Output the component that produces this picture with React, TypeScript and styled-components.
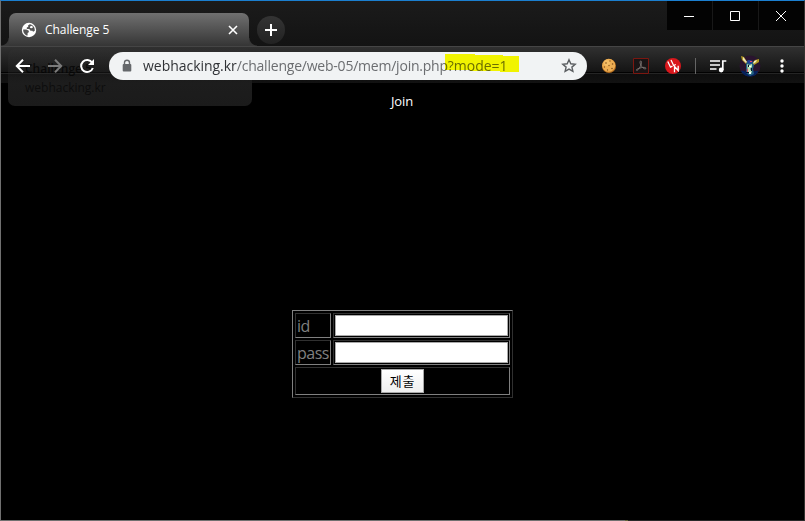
import React from "react";
import styled, { createGlobalStyle } from "styled-components";

const GlobalStyle = createGlobalStyle`
  * { box-sizing: border-box; }
  body { margin: 0; background: #000; overflow: hidden; }
  button, input { font: inherit; margin: 0; padding: 0; }
`;

const BrowserWindow = styled.div`
  position: relative;
  display: flex;
  flex-direction: column;
  width: 805px;
  height: 521px;
  background: #000;
  border: 1px solid #707070;
  border-top-color: #1b7fd0;
  border-right-color: #34322f;
  border-bottom: 0;
  font-family: "Open Sans", "Noto Sans", "Noto Sans CJK KR", sans-serif;
`;

const TabStrip = styled.header`
  display: flex;
  height: 45px;
  padding-left: 8px;
  background: linear-gradient(#1b1b1b, #131313);
`;

const Tab = styled.div`
  position: relative;
  display: flex;
  align-items: center;
  width: 240px;
  height: 33px;
  margin-top: 12px;
  padding: 0 11px 0 12px;
  border-radius: 7px 7px 0 0;
  background: linear-gradient(#707070, #353535);
  color: #fff;
  &::before, &::after {
    content: "";
    position: absolute;
    bottom: 0;
    width: 8px;
    height: 8px;
  }
  &::before {
    left: -8px;
    background: radial-gradient(circle at 0 0, transparent 7px, #383838 8px);
  }
  &::after {
    right: -8px;
    background: radial-gradient(circle at 100% 0, transparent 7px, #383838 8px);
  }
`;

const TabTitle = styled.span`
  flex: 1;
  margin-left: 8px;
  font-size: 12px;
  line-height: 16px;
  letter-spacing: -0.06px;
`;

const NewTab = styled.button`
  display: grid;
  place-items: center;
  width: 28px;
  height: 28px;
  margin: 15px 0 0 8px;
  border: 0;
  border-radius: 50%;
  background: linear-gradient(#343434, #222);
`;

const WindowControls = styled.div`
  display: flex;
  gap: 1px;
  height: 29px;
  margin-left: auto;
  background: #181818;
`;

const ControlButton = styled.button`
  display: grid;
  place-items: center;
  width: 45px;
  padding-right: 1px;
  border: 0;
  background: #030303;
`;

const Toolbar = styled.nav`
  display: flex;
  align-items: flex-start;
  height: 37px;
  padding: 5px 0 0 14px;
  border-top: 1px solid #454545;
  background: linear-gradient(#303030 0, #141414 25px, #020202 25px, #020202 26px, #252525 26px, #252525 27px, #0e0e0e 27px, #121212 100%);
`;

const IconSlot = styled.span<{ $width: number; $gap?: number }>`
  display: grid;
  place-items: center;
  flex: none;
  width: ${(p) => p.$width}px;
  height: 28px;
  margin-left: ${(p) => p.$gap ?? 0}px;
`;

const AddressBar = styled.div`
  display: flex;
  align-items: center;
  width: 478px;
  height: 28px;
  margin-left: 14px;
  padding: 0 10px 0 12px;
  border-radius: 14px;
  background: #f1f3f4;
`;

const Url = styled.div`
  position: relative;
  flex: 1;
  height: 28px;
  margin-left: 10px;
  color: #6b6d70;
  font-size: 14px;
  line-height: 28px;
  white-space: nowrap;
  letter-spacing: -0.22px;
`;

const Host = styled.span`
  color: #303236;
  letter-spacing: -0.03px;
`;

const Query = styled.span`
  letter-spacing: -0.02px;
`;

const Marker = styled.svg`
  position: absolute;
  left: 302px;
  top: 1px;
  mix-blend-mode: multiply;
`;

const Divider = styled.span`
  width: 1px;
  height: 16px;
  margin: 6px 0 0 14px;
  background: #656565;
`;

const TabHover = styled.aside`
  position: absolute;
  left: 7px;
  top: 48px;
  width: 244px;
  height: 57px;
  padding: 10px 17px;
  border-radius: 7px;
  background: linear-gradient(rgba(54, 54, 54, 0.18) 0, rgba(46, 46, 46, 0.3) 25px, #1d1d1d 34px, #1b1b1b 100%);
  color: #0d0d0d;
  font-size: 12px;
  line-height: 19px;
  z-index: 1;
  pointer-events: none;
`;

const HoverTitle = styled.div`
  color: rgba(0, 0, 0, 0.68);
  font-weight: 600;
`;

const OverlayBar = styled.div`
  position: relative;
  z-index: 2;
  display: flex;
`;

const Page = styled.main`
  flex: 1;
  display: flex;
  flex-direction: column;
  align-items: center;
`;

const Heading = styled.div`
  margin-top: 9px;
  padding-right: 1px;
  color: #fff;
  font-size: 13px;
  line-height: 18px;
  letter-spacing: -0.1px;
`;

const JoinForm = styled.form`
  display: grid;
  grid-template-columns: 36px 177px;
  grid-template-rows: 25px 25px 28px;
  gap: 2px;
  width: 221px;
  height: 88px;
  margin-top: 200px;
  padding: 2px;
  border: 1px solid;
  border-color: #808080 #303030 #303030 #808080;
`;

const Cell = styled.div<{ $wide?: boolean }>`
  display: flex;
  align-items: center;
  justify-content: ${(p) => (p.$wide ? "center" : "flex-start")};
  grid-column: ${(p) => (p.$wide ? "1 / -1" : "auto")};
  padding: 1px;
  border: 1px solid;
  border-color: #303030 #808080 #808080 #303030;
  color: #808080;
  font-size: 16px;
  line-height: 23px;
  letter-spacing: -0.5px;
`;

const Label = styled.label`
  padding-top: 1px;
`;

const Field = styled.input`
  width: 173px;
  height: 21px;
  border: 1px solid #a9a9a9;
  background: #fff;
  outline: 0;
`;

const Submit = styled.button`
  width: 43px;
  height: 24px;
  border: 1px solid #a9a9a9;
  background: linear-gradient(#fff, #efefef);
  color: #000;
  font: 13px/20px "Noto Sans CJK KR", sans-serif;
  letter-spacing: 0.7px;
`;

const Footer = styled.div`
  height: 1px;
  background: linear-gradient(90deg, #707070 624px, #66663c 624px, #66663c 627px, #292929 627px);
`;

const Globe = () => (
  <svg width="16" height="16" viewBox="0 0 16 16">
    <circle cx="8" cy="8" r="7.2" fill="#fff" />
    <path d="M8.8 2.3 7 3.6l.3 1.2-1.5.7v1.4h2.5l1.2 1.9h1.8l.9 1 1.6-1.1C14 5.4 12 2.8 8.8 2.3Z" fill="#555" />
    <path d="M2.2 7.4h3.2l2.4 1.3v1.6l-1.2.8v2.5C4 13 2 10.600 2.200 7.400Z" fill="#555" />
    <path d="m9.300 4.200 1.600-.5 1.200 1.600-1.500 1-1.700-.6Z" fill="#fff" />
  </svg>
);

const Cookie = () => (
  <svg width="16" height="16" viewBox="0 0 16 16">
    <circle cx="8" cy="8" r="7" fill="#b66d1d" />
    <circle cx="7.7" cy="7.3" r="6.5" fill="#edae53" />
    <circle cx="6" cy="5" r="3" fill="#f4bd65" />
    <g fill="#835019">
      <circle cx="5" cy="5" r=".8" /><circle cx="9" cy="3" r=".7" /><circle cx="11.6" cy="6" r=".8" />
      <circle cx="8" cy="7.5" r=".7" /><circle cx="3.4" cy="9" r=".7" /><circle cx="11" cy="10.5" r=".8" /><circle cx="6.5" cy="12" r=".7" />
    </g>
  </svg>
);

const Acrobat = () => (
  <svg width="16" height="16" viewBox="0 0 16 16">
    <path d="M.5.5h15v15H.5z" fill="#191415" stroke="#7b1710" />
    <path d="M7.7 3c1.500 0 .8 3.200-.3 5.300-1.200 2.600-2.900 4.400-3.900 4-1.200-.6 2.800-2.500 6.400-2.900 3.700-.3 3.800 1.700 1.700 1.400C9.500 10.200 6.800 6.600 7 4c.1-.7.3-1 .7-1Z" fill="none" stroke="#77706e" />
  </svg>
);

const RedBadge = () => (
  <svg width="16" height="16" viewBox="0 0 16 16">
    <circle cx="8" cy="8" r="8" fill="#d9171c" />
    <path d="m2.800 3.500 2.700 5.700 2-1M6 2l2.600 5.500 2.200-1M9.500 14.200V8.500l3.700 4V7.800" fill="none" stroke="#fff" strokeWidth="1.3" />
  </svg>
);

const Avatar = () => (
  <svg width="22" height="22" viewBox="0 0 22 22">
    <circle cx="11" cy="11" r="10.5" fill="#2a142f" />
    <path d="M2 16c3-1 5 2 9 1s6-1 8-1c-1 4-4 5.5-8 5.5S4 20 2 16Z" fill="#06215b" />
    <path d="m2 1 3 1 3 5-1 2-4-4Z" fill="#b59a22" /><path d="m4 2 1 1 3 4-1 1-3-3Z" fill="#eee6bd" />
    <path d="m20 4-4 1-3 4 2 1 5-3Z" fill="#b59a22" /><path d="m18 5-3 1-1 3 3-2Z" fill="#f2eec4" />
    <path d="m7 9 2-4 4 1 2 4-1 4 1 5-4 2-4-3Z" fill="#226082" />
    <path d="m8 9 2 1 3-1v3l-2 2 2 2-1 3-3-1Z" fill="#b9dfb4" />
    <path d="m8 6 2-1 4 1-2 3-3-1Z" fill="#223a9a" /><path d="M11 6h2v1h-2zM8 14h1v3H8z" fill="#e14b66" />
    <path d="M9 10h1v2H9zM12 13h1v3h-1zM7 17h3v1H7z" fill="#071026" />
    <path d="M10 11h2v1h-2zM10 17h2v2h-2z" fill="#fff" />
  </svg>
);

export default function App() {
  return (
    <>
      <GlobalStyle />
      <BrowserWindow>
        <TabStrip>
          <Tab>
            <Globe />
            <TabTitle>Challenge 5</TabTitle>
            <svg width="10" height="10" viewBox="0 0 10 10"><path d="m1 1 8 8m0-8L1 9" stroke="#fff" strokeWidth="1.6" /></svg>
          </Tab>
          <NewTab aria-label="New tab"><svg width="12" height="12"><path d="M6 0v12M0 6h12" stroke="#fff" strokeWidth="2" /></svg></NewTab>
          <WindowControls>
            <ControlButton aria-label="Minimize"><svg width="10" height="10"><path d="M0 5.5h10" stroke="#fff" /></svg></ControlButton>
            <ControlButton aria-label="Maximize"><svg width="10" height="10"><path d="M.5.5h9v9h-9z" fill="none" stroke="#fff" /></svg></ControlButton>
            <ControlButton aria-label="Close"><svg width="10" height="10"><path d="m0 0 10 10M10 0 0 10" stroke="#fff" /></svg></ControlButton>
          </WindowControls>
        </TabStrip>
        <TabHover><HoverTitle>Challenge 5</HoverTitle>webhacking.kr</TabHover>
        <Toolbar>
          <OverlayBar>
            <IconSlot $width={16}><svg width="16" height="16"><path d="M15 8H2.5M8 1.8 1.8 8 8 14.2" fill="none" stroke="#fff" strokeWidth="2" /></svg></IconSlot>
            <IconSlot $width={16} $gap={16}><svg width="16" height="16"><path d="M1 8h12.5M8 1.8 14.2 8 8 14.2" fill="none" stroke="#7b7b7b" strokeWidth="2" /></svg></IconSlot>
            <IconSlot $width={16} $gap={16}><svg width="16" height="16"><path d="M13.2 4.8A6 6 0 1 0 13.8 10" fill="none" stroke="#fff" strokeWidth="2" /><path d="M15 1v6H9Z" fill="#fff" /></svg></IconSlot>
            <AddressBar>
              <svg width="12" height="14" viewBox="0 0 12 14"><rect x="1.7" y="5" width="8.6" height="7.5" rx="1" fill="#65686b" /><path d="M3.5 5.5V3.7a2.5 2.5 0 0 1 5 0v1.8" fill="none" stroke="#65686b" strokeWidth="1.4" /></svg>
              <Url>
                <Host>webhacking.kr</Host>/challenge/web-05/mem/join.php<Query>?mode=1</Query>
                <Marker width="76" height="20"><path d="M0 1h30v1h28v1h16v16H55v-1H25v-1H0Z" fill="#ffff00" /></Marker>
              </Url>
              <svg width="16" height="16" viewBox="0 0 16 16"><path d="m8 1.8 1.8 4 4.4.4-3.3 2.9 1 4.3L8 11.1l-3.9 2.3 1-4.3-3.3-2.9 4.4-.4Z" fill="none" stroke="#5c5f62" strokeWidth="1.4" /></svg>
            </AddressBar>
          </OverlayBar>
          <IconSlot $width={16} $gap={14}><Cookie /></IconSlot>
          <IconSlot $width={16} $gap={16}><Acrobat /></IconSlot>
          <IconSlot $width={16} $gap={16}><RedBadge /></IconSlot>
          <Divider />
          <IconSlot $width={17} $gap={14}><svg width="17" height="14"><path d="M0 2h10M0 6h10M0 10h6.500M12.800 11V2h3.500" fill="none" stroke="#fff" strokeWidth="1.7" /><circle cx="11.2" cy="11" r="2.4" fill="#fff" /></svg></IconSlot>
          <IconSlot $width={22} $gap={12}><Avatar /></IconSlot>
          <IconSlot $width={4} $gap={19}><svg width="4" height="14"><circle cx="2" cy="2" r="1.7" fill="#fff" /><circle cx="2" cy="7" r="1.7" fill="#fff" /><circle cx="2" cy="12" r="1.7" fill="#fff" /></svg></IconSlot>
        </Toolbar>
        <Page>
          <Heading>Join</Heading>
          <JoinForm onSubmit={(e) => e.preventDefault()}>
            <Cell><Label htmlFor="id">id</Label></Cell><Cell><Field id="id" /></Cell>
            <Cell><Label htmlFor="pass">pass</Label></Cell><Cell><Field id="pass" type="password" /></Cell>
            <Cell $wide><Submit>제출</Submit></Cell>
          </JoinForm>
        </Page>
        <Footer />
      </BrowserWindow>
    </>
  );
}
